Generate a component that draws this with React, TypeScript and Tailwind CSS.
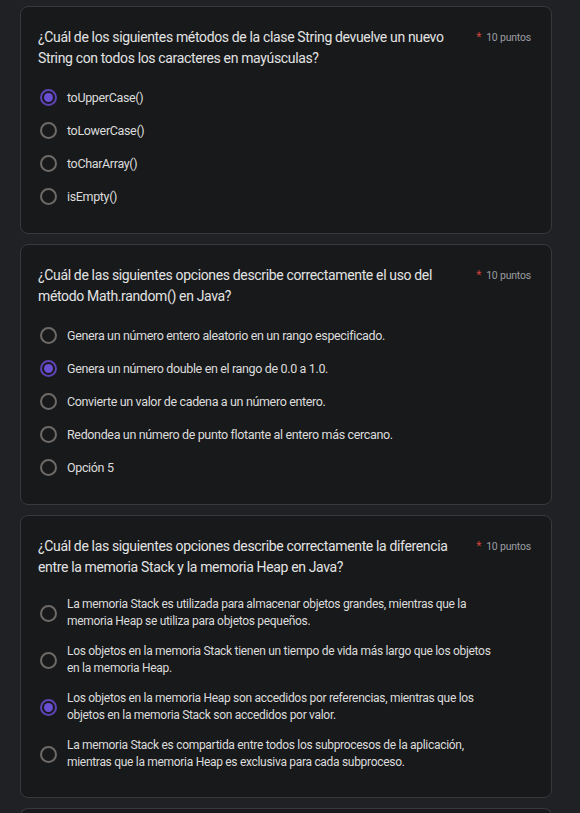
import React from "react";

type Question = {
  title: string[];
  options: string[][];
  selected: number;
};

const questions: Question[] = [
  {
    title: [
      "¿Cuál de los siguientes métodos de la clase String devuelve un nuevo",
      "String con todos los caracteres en mayúsculas?",
    ],
    options: [["toUpperCase()"], ["toLowerCase()"], ["toCharArray()"], ["isEmpty()"]],
    selected: 0,
  },
  {
    title: [
      "¿Cuál de las siguientes opciones describe correctamente el uso del",
      "método Math.random() en Java?",
    ],
    options: [
      ["Genera un número entero aleatorio en un rango especificado."],
      ["Genera un número double en el rango de 0.0 a 1.0."],
      ["Convierte un valor de cadena a un número entero."],
      ["Redondea un número de punto flotante al entero más cercano."],
      ["Opción 5"],
    ],
    selected: 1,
  },
  {
    title: [
      "¿Cuál de las siguientes opciones describe correctamente la diferencia",
      "entre la memoria Stack y la memoria Heap en Java?",
    ],
    options: [
      [
        "La memoria Stack es utilizada para almacenar objetos grandes, mientras que la",
        "memoria Heap se utiliza para objetos pequeños.",
      ],
      [
        "Los objetos en la memoria Stack tienen un tiempo de vida más largo que los objetos",
        "en la memoria Heap.",
      ],
      [
        "Los objetos en la memoria Heap son accedidos por referencias, mientras que los",
        "objetos en la memoria Stack son accedidos por valor.",
      ],
      [
        "La memoria Stack es compartida entre todos los subprocesos de la aplicación,",
        "mientras que la memoria Heap es exclusiva para cada subproceso.",
      ],
    ],
    selected: 2,
  },
];

function Radio({ checked }: { checked: boolean }) {
  return checked ? (
    <span className="flex h-[17px] w-[17px] shrink-0 items-center justify-center rounded-full border-2 border-[#5d43b3]">
      <span className="h-[9px] w-[9px] rounded-full bg-[#6a4fd2]" />
    </span>
  ) : (
    <span className="h-[17px] w-[17px] shrink-0 rounded-full border-2 border-[#6d6a67]" />
  );
}

function QuestionCard({ q }: { q: Question }) {
  const multi = q.options.some((o) => o.length > 1);
  return (
    <div
      className={
        multi
          ? "rounded-lg border border-[#38393b] bg-[#18191b] pb-[26px] pl-[17px] pr-[20px] pt-[20px]"
          : "rounded-lg border border-[#38393b] bg-[#18191b] pb-[20px] pl-[17px] pr-[20px] pt-[20px]"
      }
    >
      <div className="flex justify-between">
        <div className="text-[14px] leading-[21px] tracking-[-0.35px] text-[#e3e3e3]">
          {q.title.map((l, i) => (
            <div key={i}>{l}</div>
          ))}
        </div>
        <div className="flex items-start pt-[4px] text-[10.5px] leading-[14px] tracking-[-0.2px] text-[#9a9da1]">
          <span className="mr-[5px] text-[12px] leading-[12px] text-[#c8423a]">*</span>
          10 puntos
        </div>
      </div>
      {multi ? (
        <div className="mt-[18px] flex flex-col gap-[13px]">
          {q.options.map((opt, i) => (
            <div key={i} className="flex items-center gap-[10px] pl-[2px]">
              <Radio checked={i === q.selected} />
              <div className="text-[12px] leading-[17px] tracking-[-0.3px] text-[#dcdcdc]">
                {opt.map((l, j) => (
                  <div key={j}>{l}</div>
                ))}
              </div>
            </div>
          ))}
        </div>
      ) : (
        <div className="mt-[12px] flex flex-col">
          {q.options.map((opt, i) => (
            <div key={i} className="flex h-[33px] items-center gap-[10px] pl-[2px]">
              <Radio checked={i === q.selected} />
              <div className="text-[12.5px] leading-[17px] tracking-[-0.35px] text-[#dcdcdc]">
                {opt[0]}
              </div>
            </div>
          ))}
        </div>
      )}
    </div>
  );
}

export default function App() {
  return (
    <div
      className="min-h-[813px] bg-[#202124] pl-[20px] pt-[6px]"
      style={{ fontFamily: "Roboto, 'Noto Sans', sans-serif" }}
    >
      <div className="flex w-[532px] flex-col gap-[10px]">
        {questions.map((q, i) => (
          <QuestionCard key={i} q={q} />
        ))}
        <div className="h-[20px] rounded-t-lg border border-b-0 border-[#38393b] bg-[#18191b]" />
      </div>
    </div>
  );
}
